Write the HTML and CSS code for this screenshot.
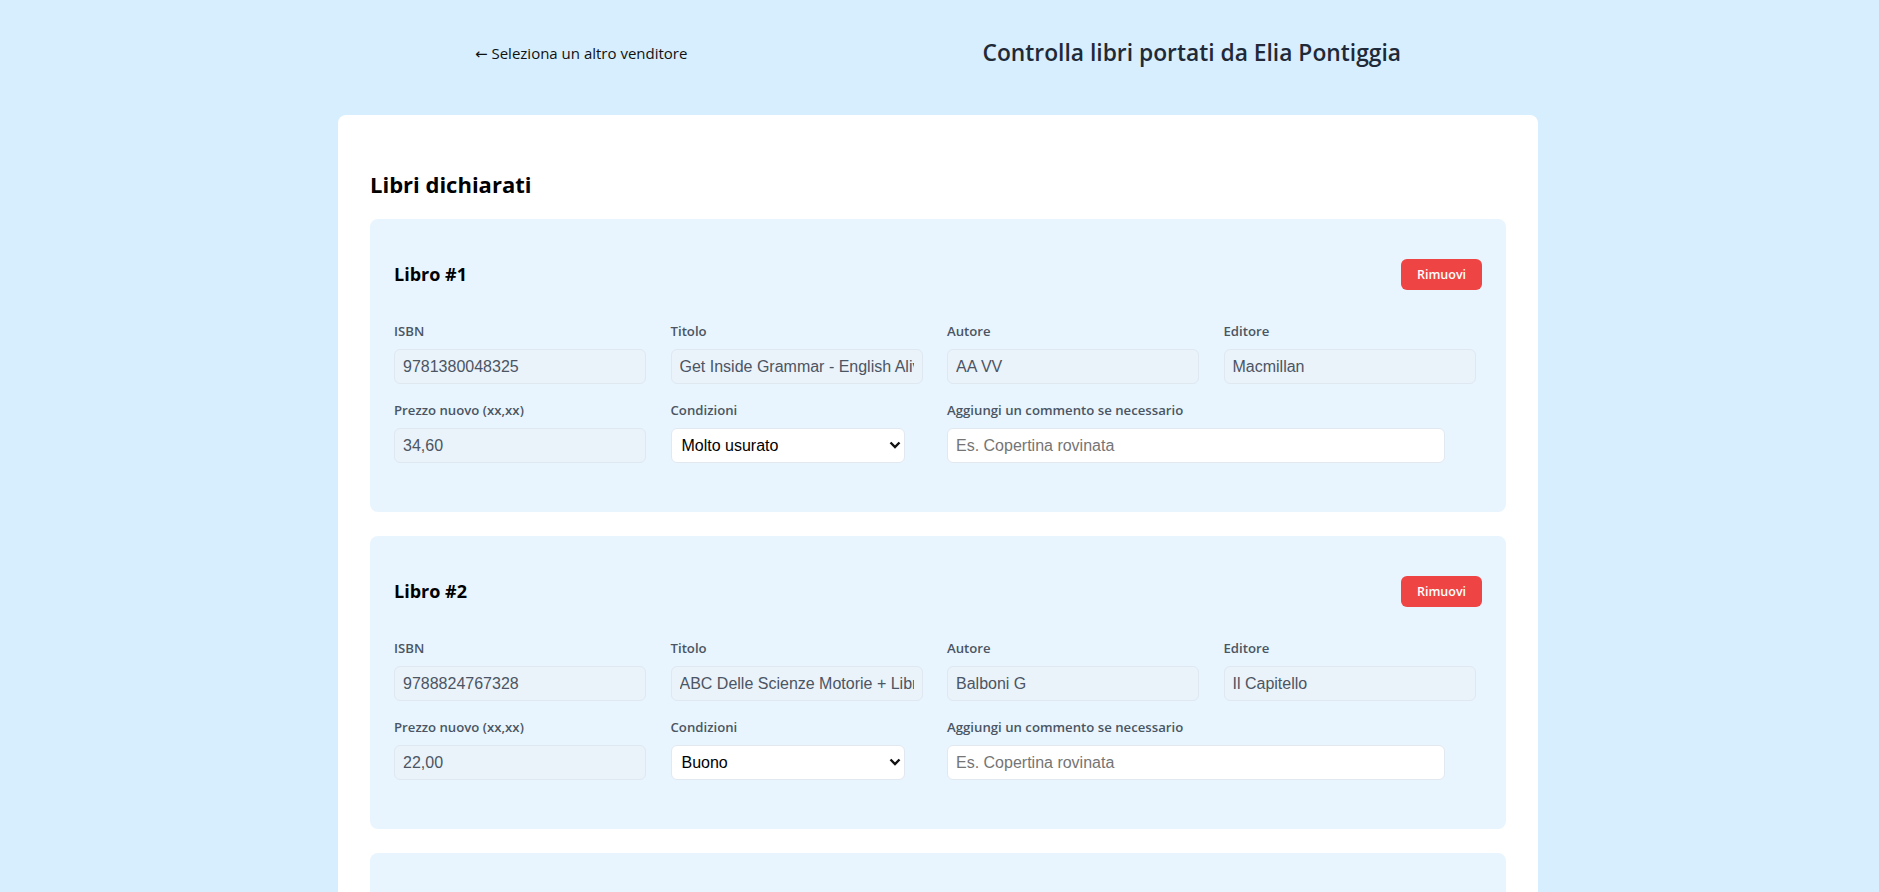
FILE: index.html
```html
<!DOCTYPE html>
<html lang="it">
<head>
<meta charset="utf-8">
<title>Controlla libri</title>
<link rel="stylesheet" href="styles.css">
</head>
<body>
<header class="topbar">
  <a class="back-link" href="#">← Seleziona un altro venditore</a>
  <h1 class="page-title">Controlla libri portati da Elia Pontiggia</h1>
</header>
<main class="panel">
  <h2 class="section-title">Libri dichiarati</h2>

  <section class="book">
    <div class="book-head">
      <h3 class="book-title">Libro #1</h3>
      <button class="btn-remove" type="button">Rimuovi</button>
    </div>
    <div class="fields">
      <div class="field"><label class="field-label">ISBN</label><input class="input ro" readonly value="9781380048325"></div>
      <div class="field"><label class="field-label">Titolo</label><input class="input ro" readonly value="Get Inside Grammar - English Alive"></div>
      <div class="field"><label class="field-label">Autore</label><input class="input ro" readonly value="AA VV"></div>
      <div class="field"><label class="field-label">Editore</label><input class="input ro" readonly value="Macmillan"></div>
      <div class="field"><label class="field-label">Prezzo nuovo (xx,xx)</label><input class="input ro" readonly value="34,60"></div>
      <div class="field"><label class="field-label">Condizioni</label>
        <div class="select-wrap">
          <select class="select"><option>Molto usurato</option><option>Buono</option><option>Ottimo</option></select>
          <svg class="chev" width="12" height="8" viewBox="0 0 12 8"><path d="M1.5 1.5 L6 6 L10.5 1.5" fill="none" stroke="#111" stroke-width="2.4"/></svg>
        </div>
      </div>
      <div class="field field-wide"><label class="field-label">Aggiungi un commento se necessario</label><input class="input comment" placeholder="Es. Copertina rovinata"></div>
    </div>
  </section>

  <section class="book">
    <div class="book-head">
      <h3 class="book-title">Libro #2</h3>
      <button class="btn-remove" type="button">Rimuovi</button>
    </div>
    <div class="fields">
      <div class="field"><label class="field-label">ISBN</label><input class="input ro" readonly value="9788824767328"></div>
      <div class="field"><label class="field-label">Titolo</label><input class="input ro" readonly value="ABC Delle Scienze Motorie + Libro digitale"></div>
      <div class="field"><label class="field-label">Autore</label><input class="input ro" readonly value="Balboni G"></div>
      <div class="field"><label class="field-label">Editore</label><input class="input ro" readonly value="Il Capitello"></div>
      <div class="field"><label class="field-label">Prezzo nuovo (xx,xx)</label><input class="input ro" readonly value="22,00"></div>
      <div class="field"><label class="field-label">Condizioni</label>
        <div class="select-wrap">
          <select class="select"><option>Buono</option><option>Molto usurato</option><option>Ottimo</option></select>
          <svg class="chev" width="12" height="8" viewBox="0 0 12 8"><path d="M1.5 1.5 L6 6 L10.5 1.5" fill="none" stroke="#111" stroke-width="2.4"/></svg>
        </div>
      </div>
      <div class="field field-wide"><label class="field-label">Aggiungi un commento se necessario</label><input class="input comment" placeholder="Es. Copertina rovinata"></div>
    </div>
  </section>

  <section class="book">
    <div class="book-head">
      <h3 class="book-title">Libro #3</h3>
      <button class="btn-remove" type="button">Rimuovi</button>
    </div>
    <div class="fields">
      <div class="field"><label class="field-label">ISBN</label><input class="input ro" readonly value="9788808220412"></div>
      <div class="field"><label class="field-label">Titolo</label><input class="input ro" readonly value="Matematica.blu 2.0"></div>
      <div class="field"><label class="field-label">Autore</label><input class="input ro" readonly value="Bergamini M"></div>
      <div class="field"><label class="field-label">Editore</label><input class="input ro" readonly value="Zanichelli"></div>
      <div class="field"><label class="field-label">Prezzo nuovo (xx,xx)</label><input class="input ro" readonly value="31,90"></div>
      <div class="field"><label class="field-label">Condizioni</label>
        <div class="select-wrap">
          <select class="select"><option>Buono</option><option>Molto usurato</option><option>Ottimo</option></select>
          <svg class="chev" width="12" height="8" viewBox="0 0 12 8"><path d="M1.5 1.5 L6 6 L10.5 1.5" fill="none" stroke="#111" stroke-width="2.4"/></svg>
        </div>
      </div>
      <div class="field field-wide"><label class="field-label">Aggiungi un commento se necessario</label><input class="input comment" placeholder="Es. Copertina rovinata"></div>
    </div>
  </section>
</main>
</body>
</html>
```
FILE: styles.css
```css
html {
  scrollbar-width: none;
}
html::-webkit-scrollbar {
  display: none;
}
body {
  margin: 0;
  padding-right: 3px;
  background: #d6eefd;
  font-family: "Open Sans", "Noto Sans", "DejaVu Sans", sans-serif;
  color: #111827;
}
.topbar {
  width: 926px;
  margin: 0 auto;
  height: 106px;
  display: flex;
  align-items: center;
  justify-content: space-between;
}
.back-link {
  color: #111;
  text-decoration: none;
  font-size: 15px;
  line-height: 20px;
}
.page-title {
  margin: 0;
  font-size: 22.8px;
  font-weight: 600;
  line-height: 30px;
  color: #1f2937;
}
.panel {
  width: 1200px;
  box-sizing: border-box;
  margin: 9px auto 0;
  background: #ffffff;
  border-radius: 8px;
  padding: 32px;
}
.section-title {
  margin: 21px 0 19px;
  font-size: 22px;
  line-height: 32px;
  font-weight: 700;
  color: #000;
}
.book {
  background: #e8f5fe;
  border-radius: 8px;
  padding: 24px 24px 49px;
  margin-bottom: 24px;
}
.book-head {
  display: flex;
  align-items: center;
  justify-content: space-between;
  margin-bottom: 16px;
}
.book-title {
  margin: 18px 0;
  font-size: 18px;
  line-height: 27px;
  font-weight: 700;
  color: #000;
}
.btn-remove {
  height: 31px;
  width: 81px;
  border: none;
  border-radius: 6px;
  background: #ef4444;
  color: #fff;
  font-family: "Open Sans", "Noto Sans", sans-serif;
  font-size: 12.5px;
  font-weight: 600;
  padding: 0;
}
.fields {
  display: grid;
  grid-template-columns: repeat(4, 252px);
  column-gap: 24.5px;
  row-gap: 17px;
}
.field {
  display: flex;
  flex-direction: column;
  align-items: flex-start;
}
.field-wide {
  grid-column: span 2;
}
.field-label {
  font-size: 13.2px;
  line-height: 18px;
  font-weight: 600;
  color: #4b5563;
  margin-bottom: 9px;
}
.input {
  box-sizing: border-box;
  height: 35px;
  width: 252px;
  padding: 0 8px;
  border: 1px solid #dfe8f1;
  border-radius: 6px;
  font-family: "Liberation Sans", Arial, sans-serif;
  font-size: 16px;
  outline: none;
}
.ro {
  background: #eaf2fa;
  color: #4b5563;
}
.comment {
  width: 498px;
  background: #ffffff;
  border-color: #e2e8f0;
}
.comment::placeholder {
  color: #757575;
}
.select-wrap {
  position: relative;
  width: 234px;
}
.select {
  box-sizing: border-box;
  width: 234px;
  height: 35px;
  appearance: none;
  -webkit-appearance: none;
  background: #ffffff;
  border: 1px solid #e2e8f0;
  border-radius: 6px;
  padding: 0 10px;
  font-family: "Liberation Sans", Arial, sans-serif;
  font-size: 16px;
  color: #000;
}
.chev {
  position: absolute;
  right: 4px;
  top: 13px;
  pointer-events: none;
}
```
